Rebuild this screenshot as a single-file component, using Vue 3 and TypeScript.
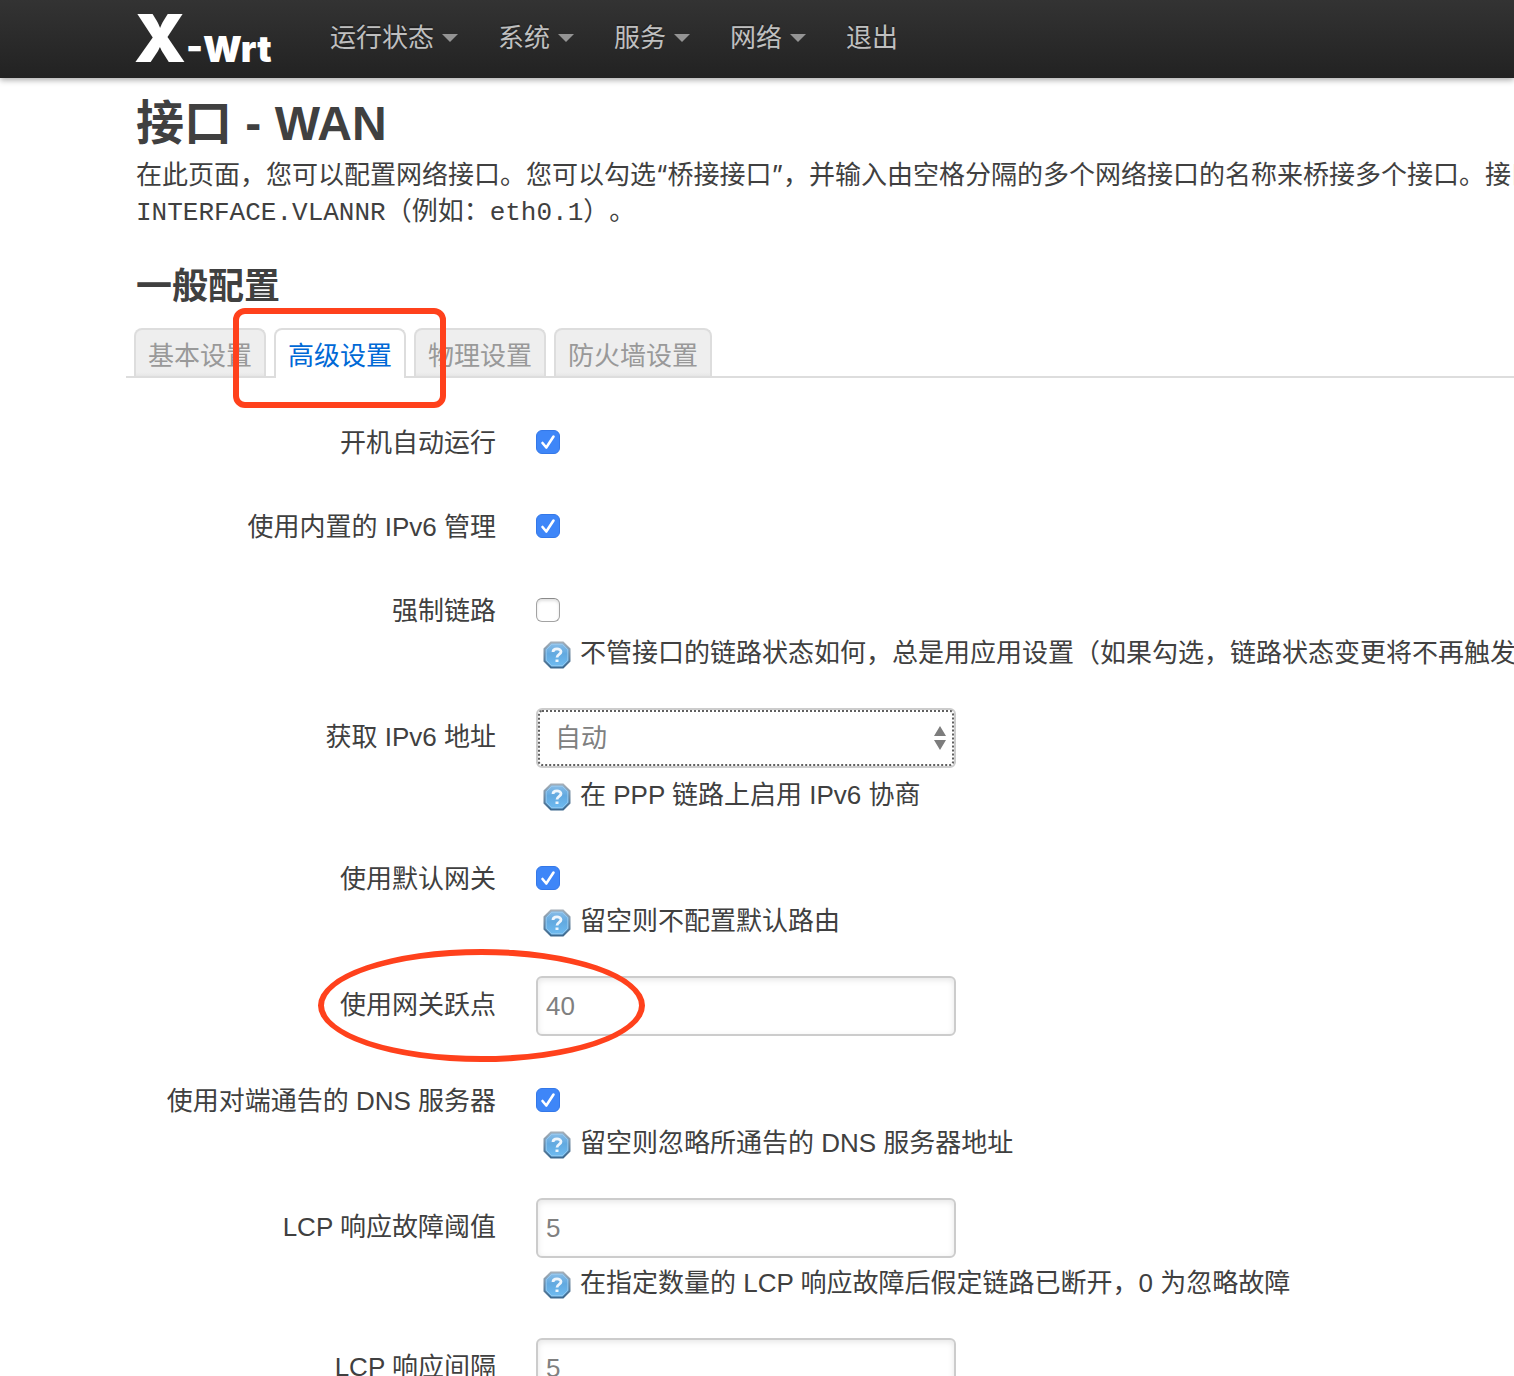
<script setup lang="ts">
import { reactive } from 'vue'

interface NavItem {
  text: string
  menu: boolean
}

interface Row {
  id: string
  label: string
  kind: 'check' | 'select' | 'text'
  value: string
  checked: boolean
  help?: string
  marked?: boolean
}

const nav: NavItem[] = [
  { text: '运行状态', menu: true },
  { text: '系统', menu: true },
  { text: '服务', menu: true },
  { text: '网络', menu: true },
  { text: '退出', menu: false },
]

const tabs = ['基本设置', '高级设置', '物理设置', '防火墙设置']
const activeTab = '高级设置'

const rows = reactive<Row[]>([
  { id: 'auto', label: '开机自动运行', kind: 'check', value: '', checked: true },
  { id: 'delegate', label: '使用内置的 IPv6 管理', kind: 'check', value: '', checked: true },
  {
    id: 'force-link',
    label: '强制链路',
    kind: 'check',
    value: '',
    checked: false,
    help: '不管接口的链路状态如何，总是用应用设置（如果勾选，链路状态变更将不再触发',
  },
  {
    id: 'ipv6',
    label: '获取 IPv6 地址',
    kind: 'select',
    value: '自动',
    checked: false,
    help: '在 PPP 链路上启用 IPv6 协商',
  },
  {
    id: 'defaultroute',
    label: '使用默认网关',
    kind: 'check',
    value: '',
    checked: true,
    help: '留空则不配置默认路由',
  },
  { id: 'metric', label: '使用网关跃点', kind: 'text', value: '40', checked: false, marked: true },
  {
    id: 'peerdns',
    label: '使用对端通告的 DNS 服务器',
    kind: 'check',
    value: '',
    checked: true,
    help: '留空则忽略所通告的 DNS 服务器地址',
  },
  {
    id: 'lcp-failure',
    label: 'LCP 响应故障阈值',
    kind: 'text',
    value: '5',
    checked: false,
    help: '在指定数量的 LCP 响应故障后假定链路已断开，0 为忽略故障',
  },
  { id: 'lcp-interval', label: 'LCP 响应间隔', kind: 'text', value: '5', checked: false },
])
</script>

<template>
  <div class="page">
    <header class="topbar">
      <a class="brand" href="#"><span class="brand-x">X</span><span>-Wrt</span></a>
      <nav class="nav">
        <a v-for="item in nav" :key="item.text" href="#">
          {{ item.text }}<i v-if="item.menu" class="caret"></i>
        </a>
      </nav>
    </header>

    <main class="content">
      <h1>接口 - WAN</h1>
      <p class="intro">
        <span>在此页面，您可以配置网络接口。您可以勾选<b>“</b>桥接接口<b>”</b>，并输入由空格分隔的多个网络接口的名称来桥接多个接口。接口</span>
        <span><code>INTERFACE.VLANNR</code>（例如：<code>eth0.1</code>）。</span>
      </p>

      <h2>一般配置</h2>
      <div class="tabs">
        <a v-for="tab in tabs" :key="tab" href="#" :class="{ active: tab === activeTab }">
          {{ tab }}<span v-if="tab === activeTab" class="mark-box"></span>
        </a>
      </div>

      <form class="rows" @submit.prevent>
        <div v-for="row in rows" :key="row.id" class="row">
          <label :for="row.id">{{ row.label }}</label>
          <div class="field" :class="row.kind">
            <div class="control">
              <input v-if="row.kind === 'check'" :id="row.id" v-model="row.checked" type="checkbox" />
              <template v-else-if="row.kind === 'select'">
                <select :id="row.id" v-model="row.value">
                  <option>自动</option>
                </select>
                <svg class="arrows" viewBox="0 0 12 24" width="12" height="24" aria-hidden="true">
                  <path d="M6 0 12 10H0ZM0 14H12L6 24Z" fill="#7d7d7d" />
                </svg>
              </template>
              <input v-else :id="row.id" v-model="row.value" type="text" />
            </div>
            <div v-if="row.help" class="help">
              <svg viewBox="0 0 28 28" width="28" height="28" aria-hidden="true">
                <defs>
                  <linearGradient :id="'fill-' + row.id" x1="0" y1="0" x2="0" y2="1">
                    <stop offset="0" stop-color="#8dbfe8" />
                    <stop offset="0.45" stop-color="#62a9e0" />
                    <stop offset="1" stop-color="#6fbdf2" />
                  </linearGradient>
                  <linearGradient :id="'edge-' + row.id" x1="0" y1="0" x2="0" y2="1">
                    <stop offset="0" stop-color="#a3aeb8" />
                    <stop offset="1" stop-color="#3d698f" />
                  </linearGradient>
                </defs>
                <path
                  d="M8 1.500H20L26.500 8V20L20 26.500H8L1.500 20V8Z"
                  :fill="`url(#fill-${row.id})`"
                  :stroke="`url(#edge-${row.id})`"
                  stroke-width="2"
                />
                <path d="M8.700 3.300H19.300L24.700 8.700V19.300L19.300 24.700H8.700L3.300 19.300V8.700Z" fill="none" stroke="#a9d3f3" stroke-opacity="0.6" />
                <path
                  d="M10 11C10 6.800 18 6.800 18 10.800C18 13.400 14 13.400 14 16.500"
                  fill="none"
                  stroke="#eef6fd"
                  stroke-width="2.800"
                />
                <path d="M12.500 18.500H15.500V21H12.500Z" fill="#eef6fd" />
              </svg>
              <span>{{ row.help }}</span>
            </div>
          </div>
          <span v-if="row.marked" class="mark-ring"></span>
        </div>
      </form>
    </main>
  </div>
</template>

<style>
body {
  margin: 0;
  background: #fff;
}
</style>

<style scoped>
.page {
  height: 100vh;
  overflow: hidden;
  color: #404040;
  font: 26px/36px 'Liberation Sans', 'Noto Sans CJK SC', sans-serif;
  white-space: nowrap;
  text-spacing-trim: space-all;
}

a {
  text-decoration: none;
}

.topbar {
  box-sizing: border-box;
  height: 78px;
  padding-left: 134px;
  display: flex;
  background: linear-gradient(#333, #222);
  box-shadow: 0 2px 6px rgba(0, 0, 0, 0.35);
}

.brand {
  width: 196px;
  flex: none;
  color: #fff;
  font: 900 36px/76px Inter, 'Liberation Sans', sans-serif;
}

.brand-x {
  font-size: 66px;
}

.nav {
  display: flex;
  gap: 40px;
  align-items: center;
  height: 76px;
}

.nav a {
  display: flex;
  align-items: center;
  gap: 8px;
  color: #bfbfbf;
  text-shadow: 0 -2px 0 rgba(0, 0, 0, 0.25);
}

.caret {
  border: 8px solid transparent;
  border-top-color: #949494;
  border-bottom: 0;
}

.content {
  padding: 13px 0 0 136px;
}

h1,
h2,
p {
  margin: 0;
}

h1 {
  font-size: 48px;
  line-height: 66px;
}

h2 {
  margin-top: 22px;
  font-size: 36px;
  line-height: 72px;
}

.intro span {
  display: block;
}

.intro b {
  font-family: Inter, sans-serif;
  font-weight: 400;
  line-height: 1;
}

code {
  font: 26px/1 'Liberation Mono', monospace;
}

.tabs {
  display: flex;
  gap: 8px;
  margin: 5px 0 36px -10px;
  padding-left: 8px;
  border-bottom: 2px solid #ddd;
}

.tabs a {
  position: relative;
  padding: 8px 12px 2px;
  border: 2px solid #ddd;
  border-bottom: 0;
  border-radius: 8px 8px 0 0;
  background: linear-gradient(#eee 92%, #e6e6e6);
  color: #999;
}

.tabs .active {
  margin-bottom: -2px;
  padding-bottom: 4px;
  background: #fff;
  color: #0069d6;
}

.mark-box {
  position: absolute;
  z-index: 1;
  inset: -22px -42px -30px -43px;
  border: 6px solid #ff411c;
  border-radius: 12px;
}

.rows {
  display: flex;
  flex-direction: column;
  gap: 36px;
}

.row {
  position: relative;
  display: flex;
  gap: 40px;
}

.row > label {
  width: 360px;
  flex: none;
  padding-top: 11px;
  text-align: right;
}

.control {
  position: relative;
  width: 420px;
  height: 60px;
}

.check .control {
  height: 48px;
}

.control input,
.control select {
  box-sizing: border-box;
  display: block;
  appearance: none;
  margin: 0;
  color: #808080;
  font: inherit;
}

.control input[type='text'],
.control select {
  width: 100%;
  height: 60px;
  padding: 0 8px;
  border: 2px solid #ccc;
  border-radius: 6px;
  background: #fff;
  box-shadow: inset 0 2px 6px rgba(0, 0, 0, 0.1);
}

.control select {
  padding: 0 17px;
  box-shadow: none;
  outline: 2px dotted #606060;
  outline-offset: -4px;
}

.arrows {
  position: absolute;
  right: 10px;
  top: 18px;
}

.check .control {
  display: flex;
  padding-top: 16px;
  box-sizing: border-box;
}

.control input[type='checkbox'] {
  width: 24px;
  height: 24px;
  border: 1px solid #a3a3a3;
  border-top-color: #8a8a8a;
  border-radius: 6px;
  background: #fff;
  box-shadow: inset 0 2px 3px rgba(0, 0, 0, 0.12);
}

.control input[type='checkbox']:checked {
  border-color: #3478e8;
  background: #3e86f8 url("data:image/svg+xml,%3Csvg xmlns='http://www.w3.org/2000/svg' viewBox='0 0 22 22'%3E%3Cpath d='M5.500 12 9.300 16.500 16.500 5.500' fill='none' stroke='white' stroke-width='2.600' stroke-linecap='round' stroke-linejoin='round'/%3E%3C/svg%3E") center / 22px 22px no-repeat;
  box-shadow: none;
}

.help {
  display: flex;
  align-items: flex-start;
  gap: 9px;
  min-height: 36px;
  margin-left: 7px;
  line-height: 34px;
}

.help svg {
  flex: none;
  margin-top: 5px;
}

.check .help {
  margin-top: 6px;
}

.text .help {
  margin-top: 8px;
}

.select .help {
  margin-top: 10px;
}

.mark-ring {
  position: absolute;
  left: 182px;
  top: -27px;
  box-sizing: border-box;
  width: 327px;
  height: 113px;
  border: 6px solid #ff411c;
  border-radius: 50%;
}
</style>
